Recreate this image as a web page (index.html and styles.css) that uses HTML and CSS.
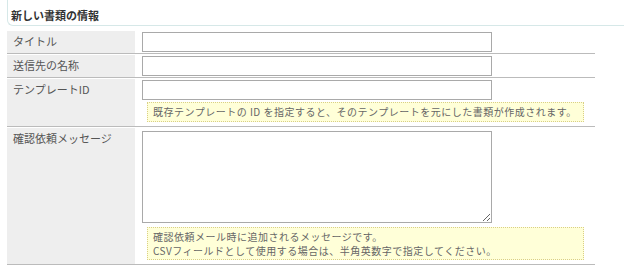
FILE: index.html
```html
<!DOCTYPE html>
<html lang="ja">
<head>
  <meta charset="UTF-8" />
  <title>新しい書類の情報</title>
  <link rel="stylesheet" href="styles.css">
</head>
<body>
  <div class="section">
    <h2 class="section-title">新しい書類の情報</h2>

    <div class="form">
      <div class="row">
        <div class="label">タイトル</div>
        <div class="field"><input type="text" class="text-input"></div>
      </div>
      <div class="row">
        <div class="label">送信先の名称</div>
        <div class="field"><input type="text" class="text-input"></div>
      </div>
      <div class="row">
        <div class="label">テンプレートID</div>
        <div class="field">
          <input type="text" class="text-input">
          <div class="hint">既存テンプレートの ID を指定すると、そのテンプレートを元にした書類が作成されます。</div>
        </div>
      </div>
      <div class="row">
        <div class="label">確認依頼メッセージ</div>
        <div class="field">
          <textarea class="text-area"></textarea>
          <div class="hint">
            <div>確認依頼メール時に追加されるメッセージです。</div>
            <div>CSVフィールドとして使用する場合は、半角英数字で指定してください。</div>
          </div>
        </div>
      </div>
    </div>
  </div>
</body>
</html>
```

FILE: styles.css
```css
body {
  margin: 0;
  background: #fff;
  font-family: "Noto Sans CJK JP", "Noto Sans", sans-serif;
  color: #555;
}
.section-title {
  margin: 0 0 5px 7px;
  padding: 8px 0 2px 3px;
  font-size: 11px;
  line-height: 15px;
  font-weight: bold;
  color: #333;
  border-left: 1px solid #d6e8e8;
  border-bottom: 1px solid #d6e8e8;
  border-bottom-left-radius: 6px;
}
.form {
  width: 588px;
  margin-left: 7px;
}
.row {
  display: flex;
  border-bottom: 1px solid #bbb;
  margin-bottom: 1px;
}
.label {
  flex: none;
  width: 128px;
  box-sizing: border-box;
  padding: 3px 6px;
  background: #eee;
  font-size: 11px;
  line-height: 15px;
  color: #555;
}
.field {
  flex: 1;
  padding: 1px 0 1px 7px;
}
.text-input,
.text-area {
  display: block;
  width: 350px;
  box-sizing: border-box;
  margin: 0;
  border: 1px solid #a9a9a9;
  background: #fff;
}
.text-input {
  height: 20px;
}
.text-area {
  height: 92px;
  margin-top: 2px;
}
.hint {
  width: 437px;
  box-sizing: border-box;
  margin: 2px 0 3px 5px;
  padding: 2px 5px;
  background: #ffffd8;
  border: 1px dotted #d9cf86;
  font-size: 10px;
  line-height: 14px;
  letter-spacing: 0.5px;
  color: #666;
}
.text-area + .hint {
  margin-top: 4px;
  line-height: 13.5px;
}
```
